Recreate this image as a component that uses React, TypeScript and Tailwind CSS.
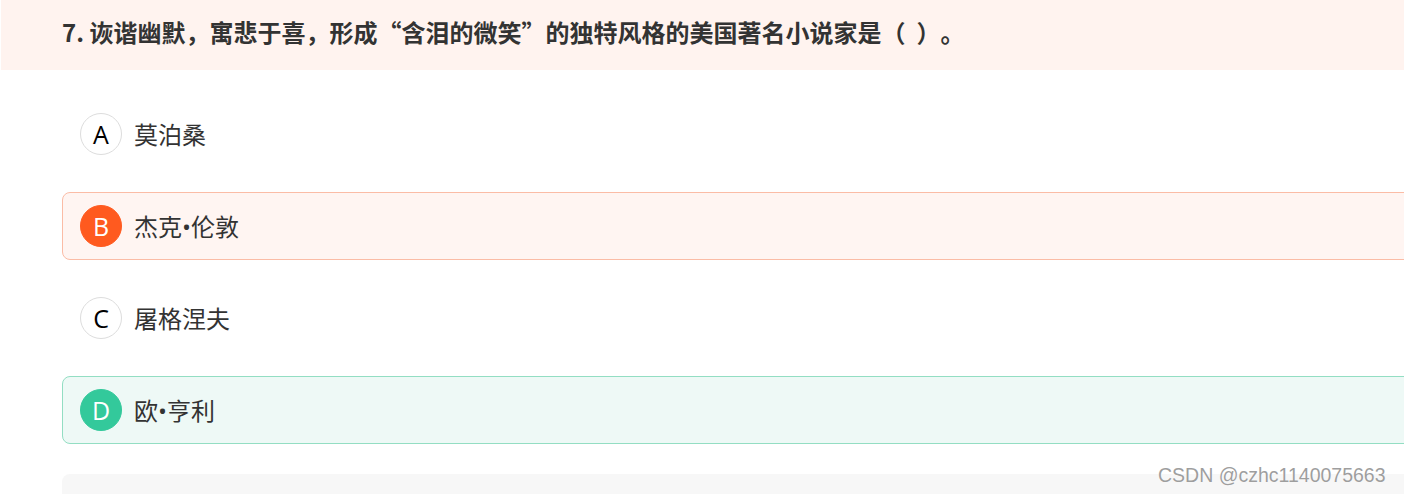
import React from "react";

type Opt = { key: string; text: React.ReactNode; state: "none" | "wrong" | "right" };

const Dot = () => <span className="font-['Open_Sans',sans-serif]">•</span>;

const options: Opt[] = [
  { key: "A", text: "莫泊桑", state: "none" },
  { key: "B", text: <>杰克<Dot />伦敦</>, state: "wrong" },
  { key: "C", text: "屠格涅夫", state: "none" },
  { key: "D", text: <>欧<Dot />亨利</>, state: "right" },
];

function Option({ o }: { o: Opt }) {
  const box =
    o.state === "wrong"
      ? "border-[#fbbca6] bg-[#fff5f2]"
      : o.state === "right"
      ? "border-[#93dec3] bg-[#eef9f6]"
      : "border-transparent bg-white";
  const circle =
    o.state === "wrong"
      ? "bg-[#ff5a1f] border-[#ff5a1f] text-white"
      : o.state === "right"
      ? "bg-[#33c99b] border-[#33c99b] text-white"
      : "bg-white border-[#dddddd] text-black";
  return (
    <div className={`flex h-[68px] items-center rounded-[8px] border pl-[17px] ${box}`}>
      <div
        className={`flex h-[42px] w-[42px] shrink-0 items-center justify-center rounded-full border font-['Open_Sans',sans-serif] text-[25px] leading-none ${circle}`}
      >
        {o.key}
      </div>
      <div className="ml-[12px] font-['Microsoft_YaHei','Noto_Sans_CJK_SC',sans-serif] text-[24px] leading-none text-[#333333]">
        {o.text}
      </div>
    </div>
  );
}

export default function App() {
  return (
    <div className="relative h-[494px] w-[1404px] overflow-hidden bg-white">
      <div className="ml-px flex h-[70px] w-[1500px] items-center bg-[#fff3ef] pb-[6px] pl-[61px]">
        <div className="flex items-baseline whitespace-pre font-['Microsoft_YaHei','Noto_Sans_CJK_SC',sans-serif] text-[24px] font-bold leading-none text-[#333333]">
          <span>7. 诙谐幽默，寓悲于喜，形成“含泪的微笑”的独特风格的美国著名小说家是</span>
          <span className="inline-block w-[24px]">（</span>
          <span className="inline-block w-[11px]" />
          <span className="inline-block w-[24px]">）</span>
          <span className="inline-block">。</span>
        </div>
      </div>
      <div className="ml-[62px] flex w-[1400px] flex-col gap-[24px] pt-[30px]">
        {options.map((o) => (
          <Option key={o.key} o={o} />
        ))}
        <div className="mt-[6px] h-[60px] rounded-[8px] bg-[#f7f7f7]" />
      </div>
      <div className="absolute left-[1158px] top-[466px] font-['Liberation_Sans',Arial,sans-serif] text-[19.5px] leading-none text-[#9e9e9e] [text-shadow:0_0_1px_#fff,0_0_1px_#fff]">
        CSDN @czhc1140075663
      </div>
    </div>
  );
}
